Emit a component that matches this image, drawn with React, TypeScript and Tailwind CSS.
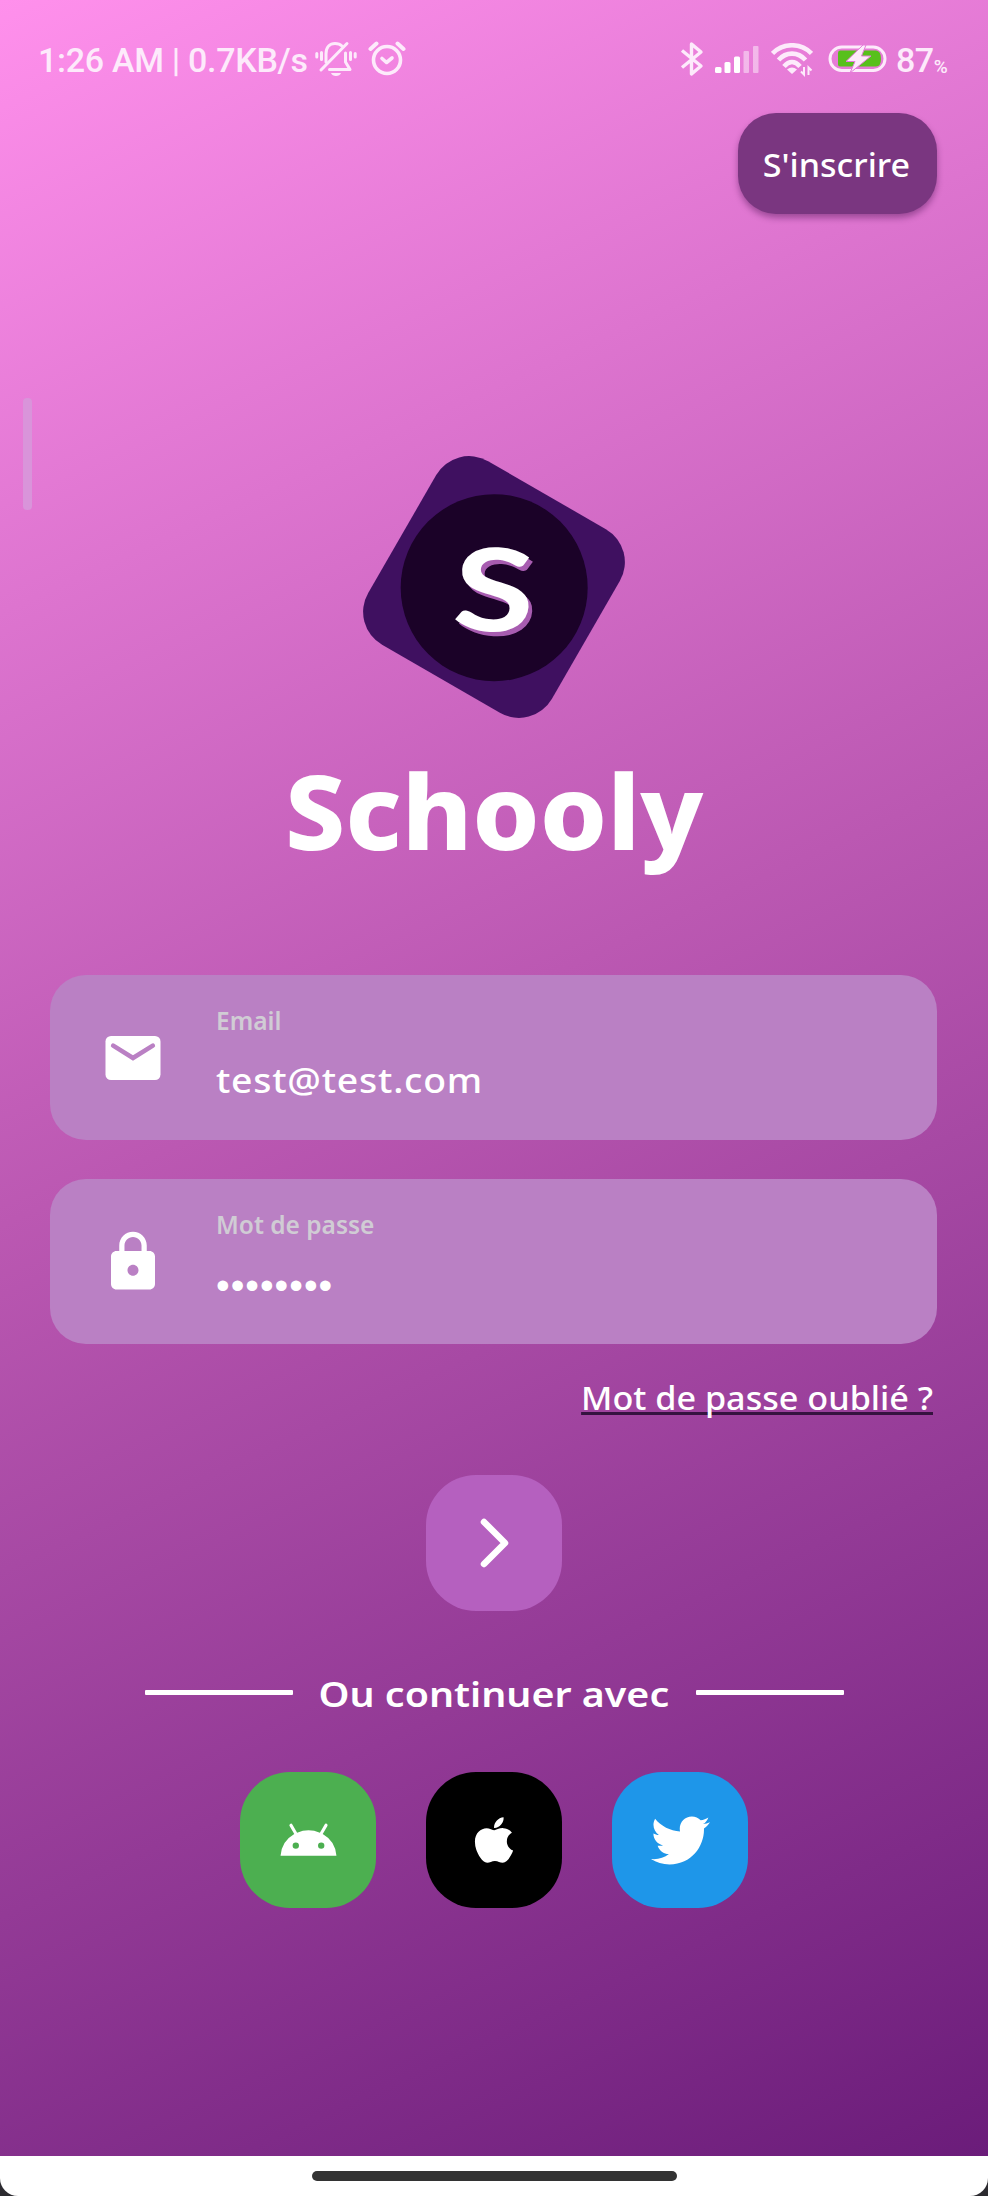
import React from "react";
import { FaApple, FaTwitter } from "react-icons/fa";
import { MdAndroid, MdLock } from "react-icons/md";

function MutedBell() {
  return (
    <svg className="h-[36px] w-[42px]" viewBox="0 0 42 36" fill="none" stroke="#fdeafb" strokeWidth="3" strokeLinecap="round">
      <path d="M11 21V13C11 6 15 2.500 20 2.500C23 2.500 25.500 3.500 27 5" />
      <path d="M30.500 12V21L35 28.500H14.500" strokeLinejoin="round" />
      <path d="M32 2.500L6 29" />
      <path d="M1.800 12.500V16M6.500 11.500V18.500M35.500 11.500V18.500M40.200 12.500V16" />
      <path d="M16 32h10c-1 4-9 4-10 0z" fill="#fdeafb" stroke="none" />
    </svg>
  );
}

function Alarm() {
  return (
    <svg className="h-[36px] w-[38px]" viewBox="0 0 38 36" fill="none" stroke="#fdeafb" strokeWidth="3.600" strokeLinecap="round">
      <circle cx="19" cy="19" r="13.500" />
      <path d="M2.500 8L8.500 2.500M35.500 8L29.500 2.500" strokeWidth="4" />
      <path d="M14 17.500L18.500 21.500L24 17" strokeLinejoin="round" />
    </svg>
  );
}

function Bluetooth() {
  return (
    <svg className="h-[36px] w-[24px]" viewBox="0 0 24 36" fill="none" stroke="#fdeafb" strokeWidth="3.400">
      <path d="M2 9.500L21 25L11.500 33V3L21 11L2 26.500" strokeLinejoin="round" />
    </svg>
  );
}

function Signal() {
  return (
    <svg className="h-[28px] w-[44px]" viewBox="0 0 44 28" fill="#fff">
      <rect x="0" y="21" width="6.500" height="6" rx="1.500" />
      <rect x="9.500" y="16" width="6" height="11" rx="1.500" />
      <rect x="19" y="10.500" width="6" height="16.500" rx="1.500" />
      <rect x="28.500" y="5" width="5.500" height="22" rx="1" opacity=".45" />
      <rect x="38" y="0" width="5.500" height="27" rx="1" opacity=".45" />
    </svg>
  );
}

function Wifi() {
  return (
    <svg className="h-[34px] w-[42px]" viewBox="0 0 42 34" fill="none" stroke="#fdeafb" strokeWidth="4.600">
      <path d="M1.500 10.500C12 -.5 30 -.5 40.500 10.500" />
      <path d="M7.500 17C15 8.500 27 8.500 34.500 17" />
      <path d="M13 23.500C18 17.500 24 17.500 29 23.500" />
      <path d="M16 26.500q5-4 10 0l-5 4.500z" fill="#fdeafb" stroke="none" />
      <path d="M33 24v7.500l-3-3M37.500 32v-7.500l3 3" strokeWidth="2" />
    </svg>
  );
}

function Battery() {
  return (
    <svg className="h-[28px] w-[60px]" viewBox="0 0 60 28" fill="none">
      <rect x="2" y="2" width="55" height="23.500" rx="11.750" stroke="#fdeafb" strokeWidth="3" />
      <path d="M12 5.500H48Q53 6 53 13.750T48 21.500H12Q10 21.500 10 19.500V8Q10 5.500 12 5.500Z" fill="#58c01c" />
      <path d="M35 0L18 16.500H27L22 28L43 11H33.500L38 0Z" fill="#fdeafb" stroke="#e47cda" strokeWidth="1" />
    </svg>
  );
}

function Mail() {
  return (
    <svg className="h-[66px] w-[66px]" viewBox="0 0 24 24">
      <rect x="2" y="4" width="20" height="16" rx="2" fill="#fff" />
      <path d="M4.800 7.500L12 12L19.200 7.500" fill="none" stroke="#ba80c4" strokeWidth="1.700" strokeLinecap="round" />
    </svg>
  );
}

function StatusBar() {
  return (
    <header className="flex h-[113px] items-start pt-[41px] pl-[38px] font-[Roboto,sans-serif] text-[#fdeafb]">
      <span className="w-[277px] text-[34px] leading-[38px] font-medium tracking-[-0.3px] whitespace-nowrap">1:26 AM | 0.7KB/s</span>
      <MutedBell />
      <span className="ml-[11px]"><Alarm /></span>
      <span className="ml-[274px]"><Bluetooth /></span>
      <span className="mt-[5px] ml-[11px]"><Signal /></span>
      <span className="mt-[2px] ml-[12px]"><Wifi /></span>
      <span className="mt-[4px] ml-[15px]"><Battery /></span>
      <span className="ml-[8px] text-[34px] leading-[38px] font-medium tracking-[-0.5px]">87</span>
      <span className="mt-[15px] text-[19px] leading-[22px] font-medium">%</span>
    </header>
  );
}

type FieldProps = { icon: React.ReactNode; label: string; children: React.ReactNode };

function Field({ icon, label, children }: FieldProps) {
  return (
    <div className="flex h-[165px] w-[887px] rounded-[36px] bg-[#ba80c4]">
      <div className="flex w-[166px] items-center justify-center text-[66px] text-white">{icon}</div>
      <div className="flex flex-col items-start pt-[29px]">
        <span className="h-[34px] text-[24.500px] leading-[34px] font-semibold text-[#d0ccd4]">{label}</span>
        {children}
      </div>
    </div>
  );
}

export default function App() {
  return (
    <main className="relative flex h-[2196px] w-[988px] flex-col overflow-hidden bg-[#2c2b30] font-['Noto_Sans',sans-serif] text-white">
      <section className="flex h-[2156px] shrink-0 flex-col items-center bg-[linear-gradient(155.4deg,#ff90ec_0%,#bb58b2_47%,#6b1c7a_100%)]">
        <div className="w-full"><StatusBar /></div>
        <button className="mr-[51px] flex h-[101px] w-[199px] items-center justify-center self-end rounded-[38px] bg-[#7a3680] text-[33px] shadow-[0_4px_6px_rgba(60,10,70,0.4)]">
          <span className="mt-[2px] mr-[2px] scale-x-[1.03] font-medium">S&apos;inscrire</span>
        </button>
        <div className="mt-[267px] mr-[1px] flex h-[212px] w-[212px] rotate-30 items-center justify-center rounded-[38px] bg-[#3f1060]">
          <div className="flex h-[187px] w-[187px] -rotate-30 items-center justify-center rounded-full bg-[#1b0228]">
            <span className="mb-[3px] scale-x-[1.29] rotate-[3deg] font-[Lato,sans-serif] text-[115px] leading-[115px] font-bold [text-shadow:3px_4px_0_#a75cb0]">S</span>
          </div>
        </div>
        <h1 className="mt-[42px] h-[150px] scale-x-[1.03] text-[104px] leading-[150px] font-extrabold">Schooly</h1>
        <div className="mt-[90px] mr-[1px] flex flex-col gap-[39px]">
          <Field icon={<Mail />} label="Email">
            <span className="mt-[18px] origin-left scale-x-[1.1] text-[34px] leading-[48px] font-medium tracking-[0.7px]">test@test.com</span>
          </Field>
          <Field icon={<MdLock />} label="Mot de passe">
            <span className="mt-[20px] font-['Liberation_Sans',sans-serif] text-[39px] leading-[48px] tracking-[1px]">••••••••</span>
          </Field>
        </div>
        <a className="mt-[30px] mr-[55px] h-[48px] origin-right scale-x-[1.035] self-end text-[33px] leading-[48px] font-medium underline decoration-[#35123f] decoration-[2.500px] underline-offset-[2px] [text-decoration-skip-ink:none]">
          Mot de passe oublié ?
        </a>
        <button className="mt-[53px] flex h-[136px] w-[136px] items-center justify-center rounded-[50px] bg-[#b560bf]">
          <svg className="ml-[2px] h-[52px] w-[32px]" viewBox="0 0 32 52" fill="none" stroke="#fff" strokeWidth="6.500" strokeLinecap="round" strokeLinejoin="round">
            <path d="M5 5L26 26L5 47" />
          </svg>
        </button>
        <div className="mt-[56px] flex h-[50px] w-[699px] items-center justify-between">
          <span className="h-[5px] w-[148px] rounded-[1px] bg-white" />
          <span className="mt-[3px] scale-x-[1.125] text-[35px] leading-[50px] font-semibold whitespace-nowrap">Ou continuer avec</span>
          <span className="h-[5px] w-[148px] rounded-[1px] bg-white" />
        </div>
        <div className="mt-[55px] flex gap-[50px]">
          <button className="flex h-[136px] w-[136px] items-center justify-center rounded-[50px] bg-[#4caf50] text-[61px]"><MdAndroid /></button>
          <button className="flex h-[136px] w-[136px] items-center justify-center rounded-[50px] bg-black text-[52px]"><FaApple /></button>
          <button className="flex h-[136px] w-[136px] items-center justify-center rounded-[50px] bg-[#1e96e9] text-[59px]"><FaTwitter /></button>
        </div>
      </section>
      <footer className="flex h-[40px] shrink-0 justify-center rounded-b-[18px] bg-white pt-[15px]">
        <span className="h-[10px] w-[365px] rounded-[5px] bg-[#333]" />
      </footer>
      <span className="absolute top-[398px] left-[23px] h-[112px] w-[9px] rounded-[4px] bg-[#d994da]" />
    </main>
  );
}
